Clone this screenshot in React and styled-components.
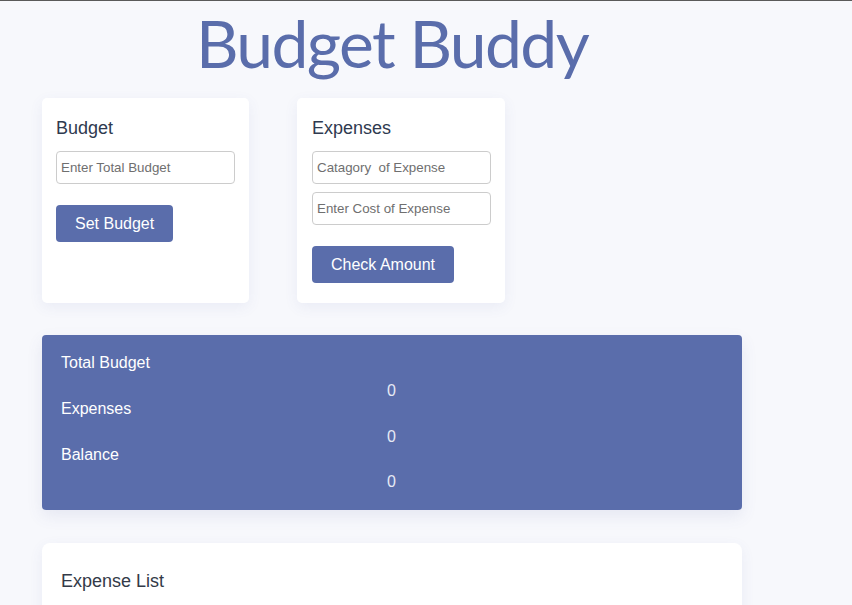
import React from "react";
import styled, { createGlobalStyle } from "styled-components";

const Global = createGlobalStyle`
  html, body { margin: 0; padding: 0; }
  body {
    background: #f7f8fc;
    border-top: 1px solid #5a5a5a;
    font-family: "Liberation Sans", Arial, sans-serif;
    min-height: 604px;
  }
  * { box-sizing: border-box; }
`;

const Page = styled.div`
  width: 700px;
  margin-left: 42px;
  display: flex;
  flex-direction: column;
`;

const Title = styled.h1`
  margin: 0;
  height: 97px;
  text-align: center;
  font-family: "Lato", "Open Sans", sans-serif;
  font-weight: 400;
  font-size: 66px;
  letter-spacing: -1.6px;
  line-height: 84px;
  color: #5a6dab;
`;

const CardRow = styled.div`
  display: flex;
  gap: 48px;
  align-items: stretch;
`;

const Card = styled.div`
  width: ${(p) => p.$w}px;
  height: 205px;
  background: #fff;
  border-radius: 5px;
  box-shadow: 0 4px 14px rgba(80, 90, 160, 0.08);
  padding: 18px 14px 18px ${(p) => p.$pl}px;
  display: flex;
  flex-direction: column;
  gap: 8px;
`;

const CardTitle = styled.h3`
  margin: 0 0 2px;
  font-weight: 400;
  font-size: 18px;
  line-height: 25px;
  color: #2f3a50;
`;

const Input = styled.input`
  width: 100%;
  height: 33px;
  border: 1px solid #cccccc;
  border-radius: 4px;
  padding: 0 4px;
  font-family: "Liberation Sans", Arial, sans-serif;
  font-size: 13.33px;
  &::placeholder { color: #6f6f6f; }
`;

const Button = styled.button`
  align-self: flex-start;
  margin-top: 13px;
  height: 37px;
  padding: 0 19px;
  border: none;
  border-radius: 4px;
  background: #5a6dab;
  color: #fff;
  font-family: "Liberation Sans", Arial, sans-serif;
  font-size: 16px;
`;

const Summary = styled.div`
  margin-top: 32px;
  height: 175px;
  background: #5a6dab;
  border-radius: 4px;
  box-shadow: 0 6px 16px rgba(80, 90, 160, 0.1);
  padding: 19px 19px;
  display: grid;
  grid-template-columns: 1fr 1fr;
`;

const Column = styled.div`
  display: flex;
  flex-direction: column;
  gap: ${(p) => p.$gap}px;
  padding-top: ${(p) => p.$offset}px;
`;

const Label = styled.div`
  font-size: 16px;
  line-height: 18px;
  color: #fff;
`;

const Value = styled.div`
  font-size: 16px;
  line-height: 18px;
  color: #e6eaf5;
  padding-left: 345px;
  margin-left: -350px;
`;

const ListCard = styled.div`
  margin-top: 33px;
  height: 120px;
  background: #fff;
  border-radius: 8px;
  box-shadow: 0 4px 14px rgba(80, 90, 160, 0.08);
  padding: 27px 19px;
`;

const ListTitle = styled.h3`
  margin: 0;
  font-weight: 400;
  font-size: 18px;
  line-height: 22px;
  color: #333a48;
`;

export default function App() {
  return (
    <>
      <Global />
      <Page>
        <Title>Budget Buddy</Title>
        <CardRow>
          <Card $w={207} $pl={14}>
            <CardTitle>Budget</CardTitle>
            <Input placeholder="Enter Total Budget" />
            <Button>Set Budget</Button>
          </Card>
          <Card $w={208} $pl={15}>
            <CardTitle>Expenses</CardTitle>
            <Input placeholder="Catagory  of Expense" />
            <Input placeholder="Enter Cost of Expense" />
            <Button>Check Amount</Button>
          </Card>
        </CardRow>
        <Summary>
          <Column $offset={0} $gap={28}>
            <Label>Total Budget</Label>
            <Label>Expenses</Label>
            <Label>Balance</Label>
          </Column>
          <Column $offset={28} $gap={27.5}>
            <Value>0</Value>
            <Value>0</Value>
            <Value>0</Value>
          </Column>
        </Summary>
        <ListCard>
          <ListTitle>Expense List</ListTitle>
        </ListCard>
      </Page>
    </>
  );
}
